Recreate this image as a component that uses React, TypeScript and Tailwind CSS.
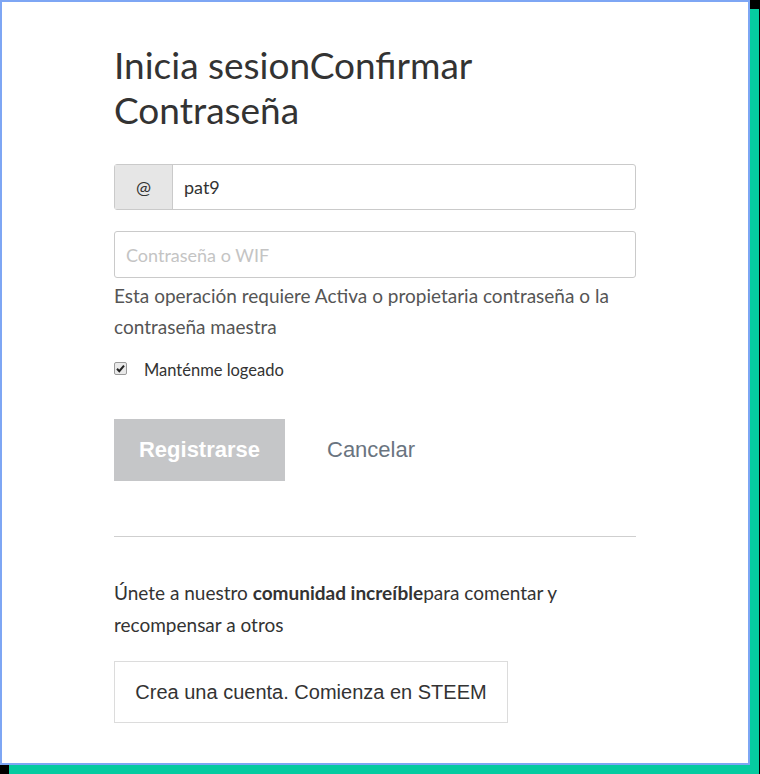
import { useState } from "react";

const SANS = "font-['Lato','Noto_Sans',sans-serif]";
const ARIAL = "font-['Liberation_Sans',Arial,sans-serif]";

export default function App() {
  const [username, setUsername] = useState("pat9");
  const [password, setPassword] = useState("");
  const [remember, setRemember] = useState(true);

  return (
    <div className="h-[774px] w-[760px] overflow-hidden bg-black">
      <div
        className={`h-[765px] w-[750px] border-2 border-[#7ea6f4] bg-white shadow-[9px_9px_0_#05cba0] ${SANS}`}
      >
        <div className="w-[634px] pl-[112px] pt-[40px]">
          <h1 className="text-[37px] leading-[45px] font-normal text-[#333]">
            Inicia sesionConfirmar Contraseña
          </h1>

          <form className="mt-[32px]" onSubmit={(e) => e.preventDefault()}>
            <div className="flex h-[46px] rounded-[3px] border border-[#cacaca]">
              <span className="flex w-[58px] items-center justify-center border-r border-[#cacaca] bg-[#e6e6e6] text-[18px] text-[#333]">
                @
              </span>
              <input
                className="min-w-0 flex-1 px-[11px] text-[18px] text-[#333] outline-none"
                onChange={(e) => setUsername(e.target.value)}
                value={username}
              />
            </div>

            <input
              className="mt-[21px] h-[47px] w-full rounded-[3px] border border-[#cacaca] px-[11px] text-[18px] text-[#333] outline-none placeholder:text-[#c4c4c4]"
              onChange={(e) => setPassword(e.target.value)}
              placeholder="Contraseña o WIF"
              type="password"
              value={password}
            />

            <p className="mt-[2px] text-[19px] leading-[31px] text-[#555]">
              Esta operación requiere Activa o propietaria contraseña o la
              contraseña maestra
            </p>

            <label className="mt-[14px] flex items-center text-[16.5px] text-[#333]">
              <span className="relative flex size-[13px]">
                <input
                  checked={remember}
                  className="m-0 size-[13px] appearance-none rounded-[2px] border border-[#9a9a9a] bg-[#e9e9e9]"
                  onChange={(e) => setRemember(e.target.checked)}
                  type="checkbox"
                />
                {remember && (
                  <svg
                    className="pointer-events-none absolute left-[1px] top-[1px]"
                    height="11"
                    viewBox="0 0 11 11"
                    width="11"
                  >
                    <path
                      d="M2 5.8 L4.3 8.2 L9 2.6"
                      fill="none"
                      stroke="#222"
                      strokeWidth="2"
                    />
                  </svg>
                )}
              </span>
              <span className="ml-[17px] translate-y-[2px]">Manténme logeado</span>
            </label>

            <div className={`mt-[38px] flex items-center ${ARIAL}`}>
              <button
                className="h-[62px] w-[171px] bg-[#c5c6c8] text-[22px] font-bold text-white"
                disabled
                type="submit"
              >
                Registrarse
              </button>
              <button
                className="ml-[42px] text-[22px] text-[#6a7480]"
                type="button"
              >
                Cancelar
              </button>
            </div>
          </form>

          <hr className="mt-[55px] border-[#cfcfcf]" />

          <p className="mt-[40px] text-[19px] leading-[32px] text-[#333]">
            Únete a nuestro{" "}
            <strong className="font-bold">comunidad increíble</strong>para
            comentar y recompensar a otros
          </p>

          <button
            className={`mt-[20px] h-[62px] w-[394px] border border-[#dcdcdc] text-[20px] text-[#333] ${ARIAL}`}
            type="button"
          >
            Crea una cuenta. Comienza en STEEM
          </button>
        </div>
      </div>
    </div>
  );
}
